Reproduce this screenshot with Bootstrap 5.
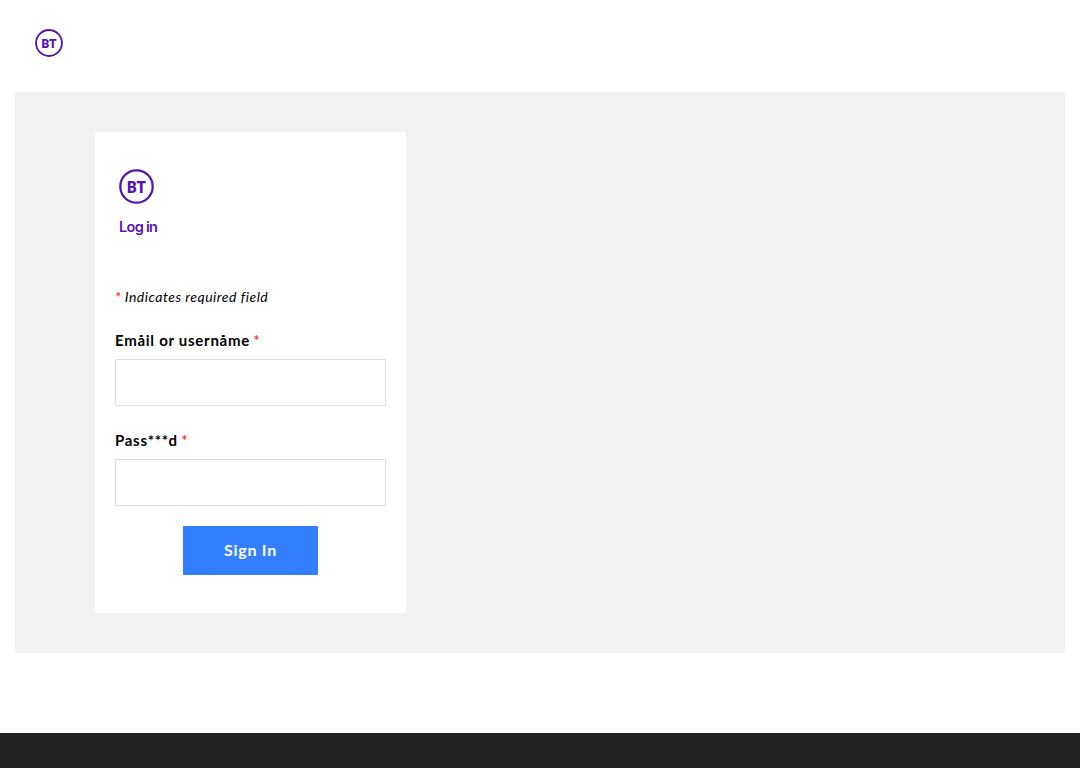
<!DOCTYPE html>
<html>
  <head>
    <title>Log in</title>
    <link href="https://cdn.jsdelivr.net/npm/bootstrap@5.3.3/dist/css/bootstrap.min.css" rel="stylesheet">
    <script src="https://cdn.jsdelivr.net/npm/bootstrap@5.3.3/dist/js/bootstrap.bundle.min.js"></script>
    <style>
      body { font-family: "Lato", "Liberation Sans", sans-serif; color: #000; background: #fff; }
      .site-head { height: 92px; padding: 29px 0 0 35px; }
      .site-head svg { display: block; width: 28px; height: 28px; }
      .grey-panel { height: 561px; margin: 0 15px; padding: 40px 80px; background: #f1f1f1; }
      .login-box { width: 311px; height: 481px; padding: 37px 20px 0; background: #fff; }
      .brand-logo { display: block; width: 35px; height: 35px; margin-left: 4px; }
      .brand-title { margin: 13px 0 0 4px; color: #5514b4; font-family: "Inter", sans-serif; font-size: 14.5px; font-weight: 600; line-height: 20px; letter-spacing: -0.7px; }
      .req-note { margin: 50px 0 0; font-size: 14px; line-height: 20px; font-style: italic; letter-spacing: 0.5px; }
      .req-star { color: #f00; font-weight: 400; }
      .field-label { display: block; margin: 0 0 9px; font-size: 15px; line-height: 20px; font-weight: 700; letter-spacing: 0.72px; }
      .field-label .req-star { margin-left: -1px; }
      .field-box { height: 47px; border: 1px solid #ddd; border-radius: 0; }
      .email-group { margin-top: 23px; }
      .pass-group { margin-top: 24px; }
      .sign-btn { display: block; width: 135px; height: 49px; margin: 20px auto 0; padding-top: 5px; border: 0; border-radius: 0; background: #337fff; color: #fff; font-size: 16px; font-weight: 700; letter-spacing: 0.75px; }
      .sign-btn:hover { background: #337fff; color: #fff; }
      .site-foot { height: 35px; margin-top: 80px; background: #222; }
    </style>
  </head>
  <body>
    <header class="site-head">
      <svg viewBox="0 0 35 35" aria-label="BT">
        <circle cx="17.5" cy="17.5" r="16.2" fill="none" stroke="#5514b4" stroke-width="2.3"/>
        <text x="8" y="23.7" textLength="19" lengthAdjust="spacingAndGlyphs" fill="#5514b4" font-family="Roboto, sans-serif" font-size="17" font-weight="900">BT</text>
      </svg>
    </header>

    <main class="grey-panel">
      <div class="login-box">
        <svg class="brand-logo" viewBox="0 0 35 35" aria-label="BT">
          <circle cx="17.5" cy="17.5" r="16.2" fill="none" stroke="#5514b4" stroke-width="2.3"/>
          <text x="8" y="23.7" textLength="19" lengthAdjust="spacingAndGlyphs" fill="#5514b4" font-family="Roboto, sans-serif" font-size="17" font-weight="900">BT</text>
        </svg>
        <p class="brand-title">Log in</p>

        <p class="req-note"><span class="req-star">*</span> Indicates required field</p>

        <form>
          <div class="email-group">
            <label class="field-label" for="username">Emåil or usernåme <span class="req-star">*</span></label>
            <input type="text" class="form-control field-box" id="username">
          </div>
          <div class="pass-group">
            <label class="field-label" for="password">Pass***d <span class="req-star">*</span></label>
            <input type="password" class="form-control field-box" id="password">
          </div>
          <button type="button" class="btn sign-btn">Sign In</button>
        </form>
      </div>
    </main>

    <footer class="site-foot"></footer>
  </body>
</html>
